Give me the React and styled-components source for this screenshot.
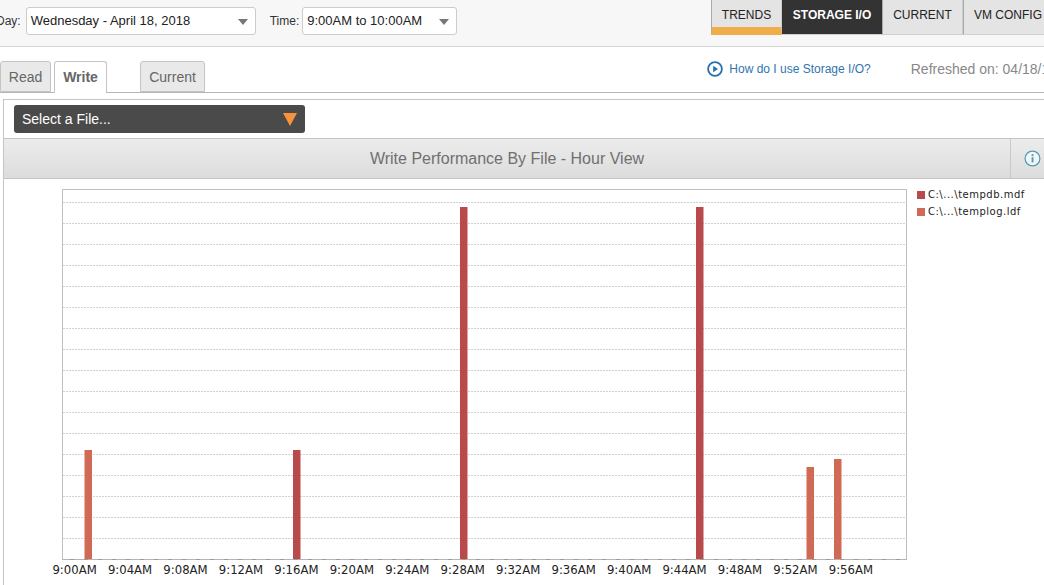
import React from "react";
import styled, { createGlobalStyle } from "styled-components";

const GlobalStyle = createGlobalStyle`
  html, body {
    margin: 0;
    padding: 0;
    height: 585px;
    overflow: hidden;
    background: #fff;
    font-family: "Liberation Sans", Arial, sans-serif;
  }
`;

const Page = styled.div`
  width: 1044px;
  height: 585px;
  overflow: hidden;
  display: flex;
  flex-flow: column;
`;

const TopBar = styled.header`
  display: flex;
  justify-content: space-between;
  box-sizing: border-box;
  height: 47px;
  flex: none;
  background: #f7f7f7;
  border-bottom: 1px solid #d4d4d4;
`;

const Filters = styled.div`
  display: flex;
  align-items: flex-start;
  padding-top: 7px;
  margin-left: -4px;
`;

const FieldLabel = styled.label`
  font-size: 12px;
  line-height: 28px;
  color: #333;
  margin-right: ${(p) => p.$gap}px;
  margin-left: ${(p) => p.$left || 0}px;
`;

const SelectBox = styled.div`
  box-sizing: border-box;
  width: ${(p) => p.$width}px;
  height: 28px;
  display: flex;
  align-items: center;
  justify-content: space-between;
  padding: 0 7px 2px 4px;
  background: #fff;
  border: 1px solid #ccc;
  border-radius: 3px;
  font-size: 13px;
  color: #222;
`;

const Caret = styled.span`
  width: 0;
  height: 0;
  margin-top: 4px;
  border-left: 5px solid transparent;
  border-right: 5px solid transparent;
  border-top: 6px solid #777;
`;

const Nav = styled.nav`
  display: flex;
  height: 35px;
  margin-right: -9px;
`;

const NavItem = styled.div`
  box-sizing: border-box;
  width: ${(p) => p.$width}px;
  height: 35px;
  padding-top: 8px;
  text-align: center;
  font-size: 12px;
  line-height: 14px;
  white-space: nowrap;
  color: ${(p) => (p.$active ? "#fff" : "#222")};
  font-weight: ${(p) => (p.$active ? 700 : 400)};
  background: ${(p) => (p.$active ? "#333" : "#e4e4e4")};
  border-left: ${(p) => (p.$active ? "none" : "1px solid #aaa")};
  border-right: ${(p) => (p.$active ? "none" : "1px solid #ccc")};
  border-bottom: ${(p) => (p.$accent ? "8px solid #efad4a" : "1px solid #d0d0d0")};
`;

const TabRow = styled.div`
  position: relative;
  display: flex;
  align-items: flex-end;
  box-sizing: border-box;
  height: 46px;
  flex: none;
  border-bottom: 1px solid #b5b5b5;
`;

const Tab = styled.div`
  box-sizing: border-box;
  width: ${(p) => p.$width}px;
  height: ${(p) => (p.$active ? 32 : 31)}px;
  margin-left: ${(p) => p.$left}px;
  margin-bottom: ${(p) => (p.$active ? -1 : 0)}px;
  text-align: center;
  font-size: 14px;
  line-height: 30px;
  color: #666;
  font-weight: ${(p) => (p.$active ? 700 : 400)};
  background: ${(p) => (p.$active ? "#fff" : "#e9e9e9")};
  border: 1px solid #c4c4c4;
  border-bottom: ${(p) => (p.$active ? "none" : "1px solid #c4c4c4")};
  border-radius: 3px 3px 0 0;
`;

const HelpLinks = styled.div`
  display: flex;
  align-items: center;
  gap: 40px;
  margin-left: auto;
  margin-right: -73px;
  align-self: flex-start;
  height: 16px;
  margin-top: 14px;
  white-space: nowrap;
`;

const HelpLink = styled.a`
  display: flex;
  align-items: center;
  gap: 6px;
  font-size: 12px;
  color: #2f75b0;
  text-decoration: none;
`;

const Refreshed = styled.span`
  font-size: 14px;
  color: #888;
`;

const Panel = styled.section`
  flex: 1;
  display: flex;
  flex-flow: column;
  margin: 6px 0 0 3px;
  border-top: 1px solid #c4c4c4;
  border-left: 1px solid #c4c4c4;
  min-height: 0;
`;

const FileRow = styled.div`
  box-sizing: border-box;
  height: 38px;
  flex: none;
  padding: 5px 0 0 10px;
`;

const FileSelect = styled.div`
  box-sizing: border-box;
  width: 291px;
  height: 28px;
  display: flex;
  align-items: center;
  justify-content: space-between;
  padding: 0 8px;
  background: #4a4a4a;
  border-radius: 3px;
  font-size: 14px;
  color: #fff;
`;

const OrangeCaret = styled.span`
  width: 0;
  height: 0;
  border-left: 7px solid transparent;
  border-right: 7px solid transparent;
  border-top: 13px solid #f7933a;
`;

const TitleBar = styled.div`
  display: flex;
  box-sizing: border-box;
  height: 41px;
  flex: none;
  background: linear-gradient(#ececec, #dcdcdc);
  border-top: 1px solid #c4c4c4;
  border-bottom: 1px solid #c4c4c4;
`;

const Title = styled.h2`
  flex: 1;
  margin: 0;
  text-align: center;
  font-size: 16px;
  font-weight: 400;
  line-height: 39px;
  color: #707070;
`;

const InfoCell = styled.div`
  box-sizing: border-box;
  width: 34px;
  flex: none;
  display: flex;
  align-items: center;
  padding-left: 13px;
  border-left: 1px solid #c8c8c8;
`;

const ChartArea = styled.div`
  display: flex;
  align-items: flex-start;
  padding-top: 5px;
`;

const Legend = styled.ul`
  list-style: none;
  margin: 2px 0 0 5px;
  padding: 0;
`;

const LegendItem = styled.li`
  display: flex;
  align-items: center;
  gap: 3px;
  height: 17px;
  font-family: "DejaVu Sans", sans-serif;
  font-size: 10px;
  letter-spacing: 0.5px;
  white-space: nowrap;
  color: #222;
`;

const Swatch = styled.span`
  width: 8px;
  height: 8px;
  background: ${(p) => p.$color};
`;

const RED = "#b94a4b";
const ORANGE = "#d06a55";

const bars = [
  { x: 84.5, top: 450, color: ORANGE },
  { x: 293, top: 450, color: RED },
  { x: 460, top: 207, color: RED },
  { x: 696, top: 207, color: RED },
  { x: 806.5, top: 467, color: ORANGE },
  { x: 834, top: 459, color: ORANGE },
];

const times = [
  "9:00AM", "9:04AM", "9:08AM", "9:12AM", "9:16AM", "9:20AM", "9:24AM",
  "9:28AM", "9:32AM", "9:36AM", "9:40AM", "9:44AM", "9:48AM", "9:52AM", "9:56AM",
];

// svg origin sits at page x=4, y=184
const Chart = () => (
  <svg width="908" height="400" viewBox="4 184 908 400" style={{ flex: "none", display: "block" }}>
    <rect x="62.5" y="189.5" width="844" height="370" fill="#fff" stroke="#c0c0c0" />
    {Array.from({ length: 17 }, (_, i) => (
      <line
        key={i}
        x1="63"
        x2="906"
        y1={202.5 + i * 21}
        y2={202.5 + i * 21}
        stroke="#d2d2d2"
        strokeDasharray="2 1"
      />
    ))}
    <line x1="62" x2="907" y1="559.5" y2="559.5" stroke="#b4b4b4" />
    <line x1="70" x2="907" y1="559.5" y2="559.5" stroke="#999" strokeDasharray="4 10" />
    {bars.map((b) => (
      <rect key={b.x} x={b.x} y={b.top} width="7.5" height={559 - b.top} fill={b.color} />
    ))}
    {times.map((t, i) => (
      <text
        key={t}
        x={74.6 + i * 55.45}
        y="574"
        textAnchor="middle"
        fontFamily="'DejaVu Sans', sans-serif"
        fontSize="11.7"
        fill="#222"
      >
        {t}
      </text>
    ))}
  </svg>
);

export default function App() {
  return (
    <Page>
      <GlobalStyle />
      <TopBar>
        <Filters>
          <FieldLabel $gap={5}>Day:</FieldLabel>
          <SelectBox $width={230}>
            Wednesday - April 18, 2018
            <Caret />
          </SelectBox>
          <FieldLabel $gap={3} $left={14}>Time:</FieldLabel>
          <SelectBox $width={155}>
            9:00AM to 10:00AM
            <Caret />
          </SelectBox>
        </Filters>
        <Nav>
          <NavItem $width={71} $accent>TRENDS</NavItem>
          <NavItem $width={100} $active>STORAGE I/O</NavItem>
          <NavItem $width={81}>CURRENT</NavItem>
          <NavItem $width={90}>VM CONFIG</NavItem>
        </Nav>
      </TopBar>
      <TabRow>
        <Tab $width={51} $left={0}>Read</Tab>
        <Tab $width={53} $left={3} $active>Write</Tab>
        <Tab $width={65} $left={33}>Current</Tab>
        <HelpLinks>
          <HelpLink href="#">
            <svg width="16" height="16" viewBox="0 0 16 16">
              <circle cx="8" cy="8" r="6.9" fill="none" stroke="#2470ad" strokeWidth="1.8" />
              <path d="M6.2 4.8 L11 8 L6.2 11.2 Z" fill="#2470ad" />
            </svg>
            How do I use Storage I/O?
          </HelpLink>
          <Refreshed>Refreshed on: 04/18/18 10:15AM</Refreshed>
        </HelpLinks>
      </TabRow>
      <Panel>
        <FileRow>
          <FileSelect>
            Select a File...
            <OrangeCaret />
          </FileSelect>
        </FileRow>
        <TitleBar>
          <Title>Write Performance By File - Hour View</Title>
          <InfoCell>
            <svg width="17" height="17" viewBox="0 0 17 17" style={{ flex: "none" }}>
              <circle cx="8.5" cy="8.5" r="7.4" fill="#f2f6f7" stroke="#4f9ab5" strokeWidth="1.2" />
              <rect x="7.6" y="7.2" width="1.9" height="5.2" fill="#4f9ab5" />
              <rect x="7.6" y="4.2" width="1.9" height="1.9" fill="#4f9ab5" />
            </svg>
          </InfoCell>
        </TitleBar>
        <ChartArea>
          <Chart />
          <Legend>
            <LegendItem><Swatch $color={RED} />C:\...\tempdb.mdf</LegendItem>
            <LegendItem><Swatch $color={ORANGE} />C:\...\templog.ldf</LegendItem>
          </Legend>
        </ChartArea>
      </Panel>
    </Page>
  );
}
